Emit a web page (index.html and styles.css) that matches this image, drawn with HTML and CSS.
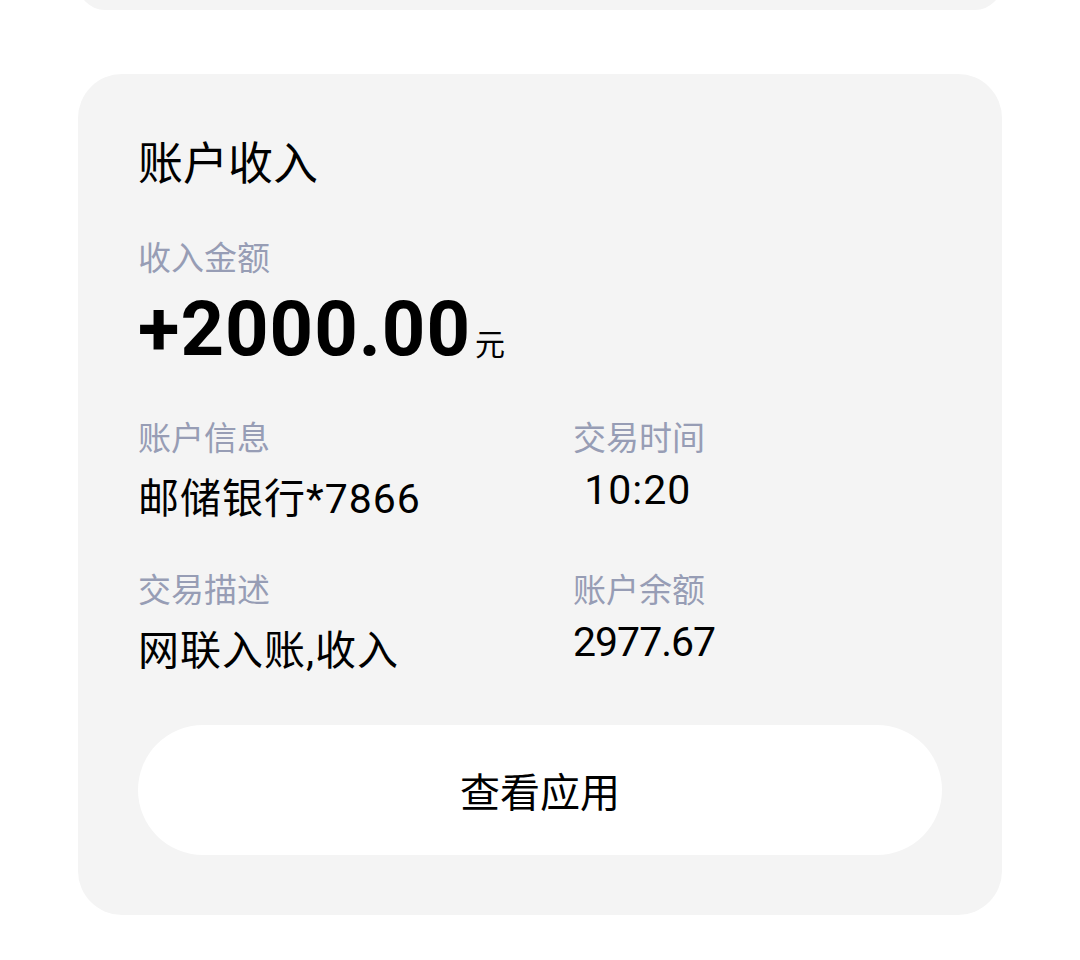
FILE: index.html
```html
<!DOCTYPE html>
<html>
<head lang="zh">
    <meta charset="UTF-8">
    <title>账户收入</title>
    <link rel="stylesheet" href="styles.css">
</head>
<body>
<div id="page">
    <div class="card card-prev"></div>
    <div class="card" id="income">
        <h1 class="title">账户收入</h1>
        <div class="label">收入金额</div>
        <div class="amount">+2000.00<span class="unit">元</span></div>
        <div class="info">
            <div class="cell">
                <div class="label">账户信息</div>
                <div class="value">邮储银行*7866</div>
            </div>
            <div class="cell right">
                <div class="label">交易时间</div>
                <div class="value">&nbsp;10:20</div>
            </div>
            <div class="cell">
                <div class="label">交易描述</div>
                <div class="value">网联入账,收入</div>
            </div>
            <div class="cell right">
                <div class="label">账户余额</div>
                <div class="value num">2977.67</div>
            </div>
        </div>
        <div class="btn">查看应用</div>
    </div>
</div>
</body>
</html>
```
FILE: styles.css
```css
*{
    margin: 0;
    padding: 0;
    box-sizing: border-box;
}
body{
    background: #fff;
    font-family: "Roboto", "Noto Sans CJK SC", sans-serif;
    color: #000;
}
#page{
    padding: 0 78px;
}
.card{
    background: #f4f4f4;
    border-radius: 44px;
}
.card-prev{
    height: 54px;
    margin-top: -44px;
    margin-bottom: 64px;
}
#income{
    padding: 57px 60px 60px;
}
.title{
    font-size: 45px;
    font-weight: normal;
    line-height: 60px;
    font-family: "Noto Sans CJK SC", sans-serif;
}
.label{
    font-size: 33px;
    line-height: 44px;
    color: #979db5;
    font-family: "Noto Sans CJK SC", sans-serif;
}
#income > .label{
    margin-top: 43px;
}
.amount{
    margin-top: 6px;
    font-size: 76px;
    font-weight: bold;
    line-height: 90px;
    letter-spacing: 1px;
}
.unit{
    font-size: 30px;
    font-weight: normal;
    line-height: 30px;
    letter-spacing: 0;
    margin-left: 4px;
    font-family: "Noto Sans CJK SC", sans-serif;
}
.info{
    display: grid;
    grid-template-columns: 435px 1fr;
    row-gap: 39px;
    margin-top: 40px;
}
.value{
    font-size: 41px;
    line-height: 56px;
    margin-top: 13px;
    letter-spacing: 1px;
}
.right .value{
    margin-top: 4px;
}
.right .num{
    letter-spacing: -1px;
}
.btn{
    margin-top: 46px;
    height: 130px;
    border-radius: 65px;
    background: #fff;
    display: flex;
    align-items: center;
    justify-content: center;
    font-size: 40px;
    font-family: "Noto Sans CJK SC", sans-serif;
}
```
